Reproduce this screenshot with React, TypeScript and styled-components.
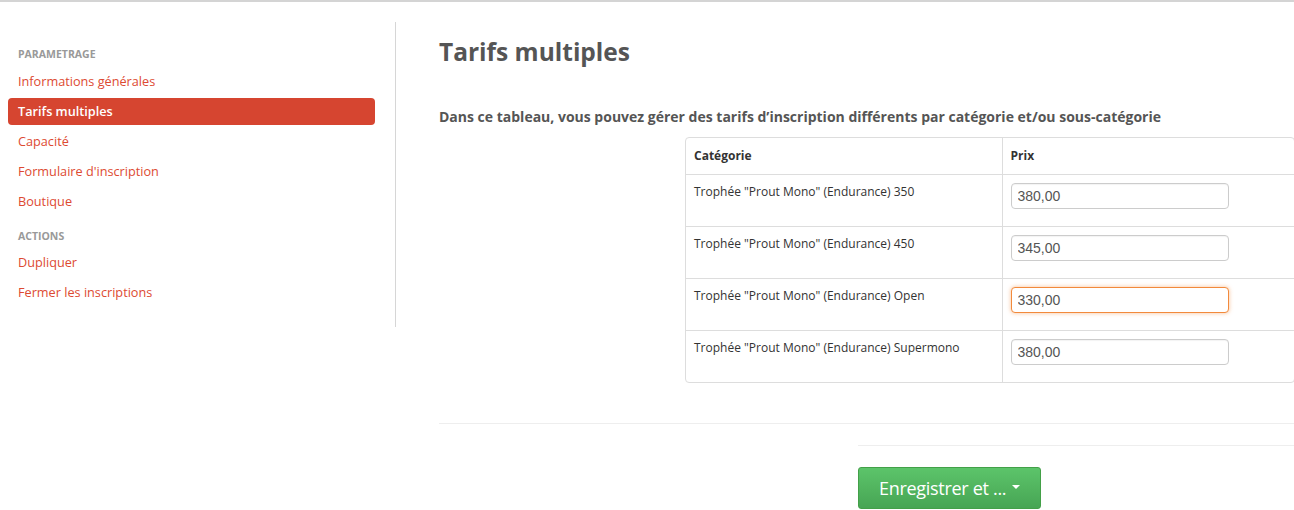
import * as React from 'react';
import styled, { createGlobalStyle } from 'styled-components';

const GlobalStyle = createGlobalStyle`
  html, body {
    margin: 0;
    padding: 0;
    background: #ffffff;
    font-family: 'Open Sans', 'Noto Sans', sans-serif;
  }
`;

type NavItem = { label: string; active?: boolean };
type NavGroup = { title: string; items: NavItem[] };

const nav: NavGroup[] = [
  {
    title: 'Parametrage',
    items: [
      { label: 'Informations générales' },
      { label: 'Tarifs multiples', active: true },
      { label: 'Capacité' },
      { label: "Formulaire d'inscription" },
      { label: 'Boutique' },
    ],
  },
  {
    title: 'Actions',
    items: [{ label: 'Dupliquer' }, { label: 'Fermer les inscriptions' }],
  },
];

const rows = [
  { name: 'Trophée "Prout Mono" (Endurance) 350', price: '380,00' },
  { name: 'Trophée "Prout Mono" (Endurance) 450', price: '345,00' },
  { name: 'Trophée "Prout Mono" (Endurance) Open', price: '330,00', focused: true },
  { name: 'Trophée "Prout Mono" (Endurance) Supermono', price: '380,00' },
];

const App = () => {
  return (
    <>
      <GlobalStyle />
      <Page>
        <Sidebar>
          {nav.map((group) => (
            <React.Fragment key={group.title}>
              <NavHeader>{group.title}</NavHeader>
              {group.items.map((item) => (
                <NavLink key={item.label} $active={item.active}>
                  {item.label}
                </NavLink>
              ))}
            </React.Fragment>
          ))}
        </Sidebar>
        <Main>
          <Title>Tarifs multiples</Title>
          <Lead>
            Dans ce tableau, vous pouvez gérer des tarifs d’inscription différents par catégorie et/ou sous-catégorie
          </Lead>
          <TableWrap>
            <Table>
              <thead>
                <tr>
                  <Th>Catégorie</Th>
                  <Th>Prix</Th>
                </tr>
              </thead>
              <tbody>
                {rows.map((row) => (
                  <tr key={row.name}>
                    <Td>{row.name}</Td>
                    <Td>
                      <PriceInput $focused={row.focused} defaultValue={row.price} />
                    </Td>
                  </tr>
                ))}
              </tbody>
            </Table>
          </TableWrap>
          <Rule />
          <Actions>
            <Rule />
            <SaveButton>
              Enregistrer et ...
              <Caret />
            </SaveButton>
          </Actions>
        </Main>
      </Page>
    </>
  );
};

export default App;

const Page = styled.div`
  display: flex;
  align-items: flex-start;
  border-top: 2px solid #d4d4d4;
  min-height: 508px;
`;

const Sidebar = styled.nav`
  box-sizing: border-box;
  width: 396px;
  flex-shrink: 0;
  margin-top: 20px;
  height: 305px;
  padding: 24px 20px 0 8px;
  border-right: 1px solid #d6d6d6;
  display: flex;
  flex-direction: column;
`;

const NavHeader = styled.div`
  padding: 0 10px;
  height: 16px;
  line-height: 16px;
  font-size: 10.5px;
  font-weight: 700;
  color: #999999;
  text-transform: uppercase;
  margin-bottom: 6px;
  &:not(:first-child) {
    margin-top: 10px;
    margin-bottom: 5px;
  }
`;

const NavLink = styled.a<{ $active?: boolean }>`
  display: block;
  height: 27px;
  line-height: 27px;
  margin-bottom: 3px;
  padding: 0 10px;
  border-radius: 4px;
  font-size: 12.7px;
  cursor: pointer;
  color: ${(p) => (p.$active ? '#ffffff' : '#dd4a32')};
  background: ${(p) => (p.$active ? '#d64530' : 'transparent')};
  font-weight: ${(p) => (p.$active ? 600 : 400)};
`;

const Main = styled.main`
  flex: 1;
  padding-left: 43px;
  padding-top: 33px;
`;

const Title = styled.h1`
  margin: 0;
  font-size: 24.5px;
  line-height: 34px;
  font-weight: 700;
  color: #555555;
`;

const Lead = styled.p`
  margin: 38px 0 0;
  font-size: 14px;
  line-height: 20px;
  font-weight: 700;
  color: #555555;
  white-space: nowrap;
`;

const TableWrap = styled.div`
  margin: 10px 0 0 246px;
  width: 608px;
  border: 1px solid #dddddd;
  border-radius: 4px;
  overflow: hidden;
`;

const Table = styled.table`
  width: 100%;
  border-collapse: collapse;
  font-size: 12px;
  color: #333333;
  tr + tr > td,
  tbody tr:first-child > td {
    border-top: 1px solid #dddddd;
  }
  td + td,
  th + th {
    border-left: 1px solid #dddddd;
  }
`;

const Th = styled.th`
  text-align: left;
  font-weight: 700;
  height: 36px;
  padding: 0 8px;
  box-sizing: border-box;
  &:first-child {
    width: 316px;
  }
`;

const Td = styled.td`
  vertical-align: top;
  padding: 8px 8px 0;
  height: 52px;
  box-sizing: border-box;
  line-height: 18px;
`;

const PriceInput = styled.input<{ $focused?: boolean }>`
  box-sizing: border-box;
  width: 218px;
  height: 26px;
  padding: 0 6px;
  font-family: 'Liberation Sans', Arial, sans-serif;
  font-size: 14px;
  color: #555555;
  background: #ffffff;
  border-radius: 4px;
  outline: none;
  border: 1px solid ${(p) => (p.$focused ? '#f28a3c' : '#cccccc')};
  box-shadow: ${(p) =>
    p.$focused ? '0 0 4px rgba(242, 138, 60, 0.55)' : 'inset 0 1px 1px rgba(0, 0, 0, 0.05)'};
`;

const Rule = styled.hr`
  margin: 40px 0 0;
  border: 0;
  border-top: 1px solid #eeeeee;
`;

const Actions = styled.div`
  margin-left: 419px;
  ${Rule} {
    margin-top: 21px;
  }
`;

const SaveButton = styled.button`
  margin-top: 21px;
  height: 42px;
  padding: 0 20px;
  display: inline-flex;
  align-items: center;
  gap: 6px;
  border: 1px solid #43a048;
  border-radius: 3px;
  background: linear-gradient(to bottom, #5cc46a, #47a554);
  color: #ffffff;
  font-family: 'Open Sans', sans-serif;
  font-size: 18px;
  letter-spacing: -0.3px;
  cursor: pointer;
`;

const Caret = styled.span`
  width: 0;
  height: 0;
  border-left: 4px solid transparent;
  border-right: 4px solid transparent;
  border-top: 4px solid #ffffff;
  margin-top: -3px;
`;
